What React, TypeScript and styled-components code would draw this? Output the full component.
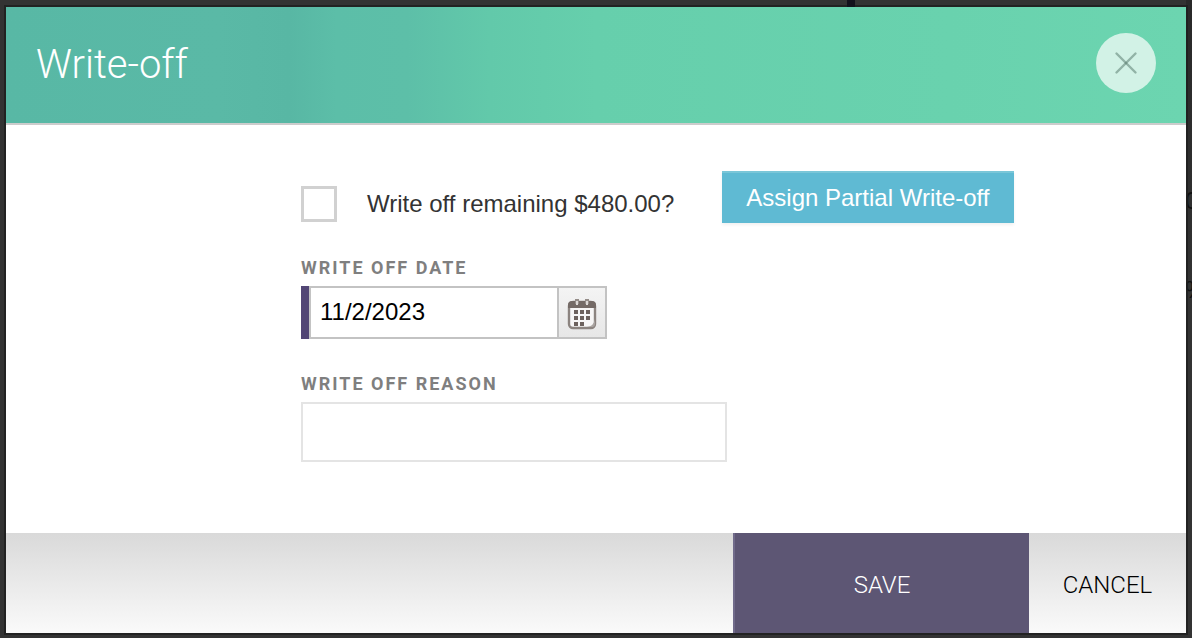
import React from 'react';
import styled, { createGlobalStyle } from 'styled-components';

const GlobalStyle = createGlobalStyle`
  *, *::before, *::after { box-sizing: border-box; }
  body {
    margin: 0;
    background: #333;
    font-family: "Liberation Sans", Arial, sans-serif;
    font-size: 24px;
    color: #333;
  }
  button, input { font: inherit; margin: 0; border-radius: 0; }
`;

const Overlay = styled.div`
  position: relative;
  display: flex;
  min-height: 100vh;
  padding: 5px 4px 3px;
  overflow: hidden;
`;

const Backdrop = styled.div`
  position: absolute;
  inset: 0;
  color: #111;
  background: linear-gradient(#292929, #333 50%) right / 6px 100% no-repeat #333;
`;

const BackdropBar = styled.div`
  position: absolute;
  top: 0;
  left: 847px;
  width: 8px;
  height: 7px;
  background: #13111c;
`;

const BackdropText = styled.span<{ $top: number }>`
  position: absolute;
  top: ${(p) => p.$top}px;
  left: calc(100% - 7px);
  line-height: 28px;
`;

const Dialog = styled.section`
  position: relative;
  display: flex;
  flex-direction: column;
  flex: 1;
  border: 2px solid rgba(30, 30, 30, 0.8);
  background: #fff;
  background-clip: padding-box;
`;

const Header = styled.header`
  display: flex;
  align-items: center;
  justify-content: space-between;
  height: 118px;
  padding: 0 30px 4px;
  border-bottom: 2px solid #ccc;
  background: linear-gradient(90deg, #58b8a5 0%, #5ab9a6 18%, #58b7a4 24%, #5cbea8 28%, #5dbfa8 34%, #62c9aa 41%, #66cfac 50%, #69d2ae 80%, #6cd5b0 100%);
`;

const Title = styled.h1`
  margin: 0;
  padding-top: 4px;
  font: 300 40px/48px Roboto, sans-serif;
  color: #fff;
`;

const CloseButton = styled.button`
  display: grid;
  place-items: center;
  width: 60px;
  height: 60px;
  padding: 0;
  border: 0;
  border-radius: 50%;
  background: #d2f2e6;
  cursor: pointer;
`;

const Body = styled.form`
  flex: 1;
  padding: 46px 30px 71px 25%;
`;

const OptionRow = styled.div`
  display: flex;
  align-items: flex-start;
  gap: 48px;
`;

const CheckLabel = styled.label`
  display: flex;
  align-items: center;
  gap: 30px;
  padding-top: 15px;
  line-height: 36px;
  white-space: nowrap;
`;

const Checkbox = styled.input`
  appearance: none;
  width: 36px;
  height: 36px;
  border: 3px solid #d1d1d1;
  background: #fff;
`;

const AssignButton = styled.button`
  height: 52px;
  padding: 0 24px;
  border: 0;
  border-top: 2px solid #7ac6d8;
  background: #5fbad3;
  box-shadow: 0 2px 3px rgba(0, 0, 0, 0.06);
  color: #fff;
  white-space: nowrap;
  cursor: pointer;
`;

const Field = styled.div<{ $gap: number }>`
  display: flex;
  flex-direction: column;
  align-items: flex-start;
  margin-top: ${(p) => p.$gap}px;
`;

const FieldLabel = styled.label`
  margin-bottom: 8px;
  font: 700 18px/20px Roboto, sans-serif;
  letter-spacing: 2px;
  color: #7f7f7f;
`;

const DateGroup = styled.div`
  display: flex;
  height: 53px;
  border-left: 8px solid #524675;
`;

const DateInput = styled.input`
  width: 248px;
  padding: 0 9px 2px;
  border: 2px solid #c3c3c3;
  border-right: 0;
  background: #fff;
  color: #000;
`;

const CalendarButton = styled.button`
  display: grid;
  place-items: center;
  width: 50px;
  padding: 3px 0 0;
  border: 2px solid #c3c3c3;
  background: linear-gradient(#f4f4f4, #e7e7e7);
  cursor: pointer;
`;

const ReasonInput = styled.input`
  width: 426px;
  max-width: 100%;
  height: 60px;
  padding: 0 12px;
  border: 2px solid #e4e4e4;
  background: #fff;
`;

const Footer = styled.footer`
  display: flex;
  justify-content: flex-end;
  height: 100px;
  background: linear-gradient(#d9d9d9, #fafafa);
`;

const FooterButton = styled.button<{ $primary?: boolean }>`
  width: ${(p) => (p.$primary ? '296px' : '157px')};
  padding: 4px 0 0;
  border: 0;
  border-left: ${(p) => (p.$primary ? '2px solid #706a8a' : '0')};
  background: ${(p) => (p.$primary ? '#5d5674' : 'transparent')};
  color: ${(p) => (p.$primary ? '#fff' : '#000')};
  font: 300 24px/28px Roboto, sans-serif;
  cursor: pointer;
`;

const CloseIcon = () => (
  <svg width="24" height="24" viewBox="0 0 24 24" fill="none" stroke="#4f7366" strokeOpacity="0.5" strokeWidth="2.400" strokeLinecap="round" aria-hidden="true">
    <path d="M2.500 2.500l19 19" />
    <path d="M21.500 2.500l-19 19" />
  </svg>
);

const CalendarIcon = () => (
  <svg width="30" height="32" viewBox="0 0 30 32" aria-hidden="true">
    <rect x="2" y="4" width="26" height="26" rx="4" fill="#f7f6f6" stroke="#8c8480" strokeWidth="2.400" />
    <path d="M1 10V7q0-4 4-4h20q4 0 4 4v3z" fill="#746a66" />
    <path d="M20 29q7-1 8-8v5q0 3-3 3z" fill="#aaa4a1" />
    <path d="M10 1v5M20 1v5" stroke="#958d89" strokeWidth="4" />
    <path d="M10 3v4M20 3v4" stroke="#dcd8d6" strokeWidth="2" />
    <g fill="#6c615d">
      <rect x="7" y="12" width="4" height="4" /><rect x="13" y="12" width="4" height="4" /><rect x="19" y="12" width="4" height="4" />
      <rect x="7" y="18" width="4" height="4" /><rect x="13" y="18" width="4" height="4" /><rect x="19" y="18" width="4" height="4" />
      <rect x="7" y="24" width="4" height="4" /><rect x="13" y="24" width="4" height="4" />
    </g>
  </svg>
);

export default function App() {
  return (
    <Overlay>
      <GlobalStyle />
      <Backdrop aria-hidden="true">
        <BackdropText $top={187}>0</BackdropText>
        <BackdropText $top={276}>%</BackdropText>
      </Backdrop>
      <Dialog role="dialog" aria-labelledby="dialog-title">
        <Header>
          <Title id="dialog-title">Write-off</Title>
          <CloseButton type="button" aria-label="Close"><CloseIcon /></CloseButton>
        </Header>
        <Body id="write-off-form" onSubmit={(e) => e.preventDefault()}>
          <OptionRow>
            <CheckLabel>
              <Checkbox type="checkbox" />
              Write off remaining $480.00?
            </CheckLabel>
            <AssignButton type="button">Assign Partial Write-off</AssignButton>
          </OptionRow>
          <Field $gap={35}>
            <FieldLabel htmlFor="date">WRITE OFF DATE</FieldLabel>
            <DateGroup>
              <DateInput id="date" type="text" defaultValue="11/2/2023" />
              <CalendarButton type="button" aria-label="Choose date"><CalendarIcon /></CalendarButton>
            </DateGroup>
          </Field>
          <Field $gap={35}>
            <FieldLabel htmlFor="reason">WRITE OFF REASON</FieldLabel>
            <ReasonInput id="reason" type="text" />
          </Field>
        </Body>
        <Footer>
          <FooterButton $primary type="submit" form="write-off-form">SAVE</FooterButton>
          <FooterButton type="button">CANCEL</FooterButton>
        </Footer>
      </Dialog>
      <BackdropBar />
    </Overlay>
  );
}
